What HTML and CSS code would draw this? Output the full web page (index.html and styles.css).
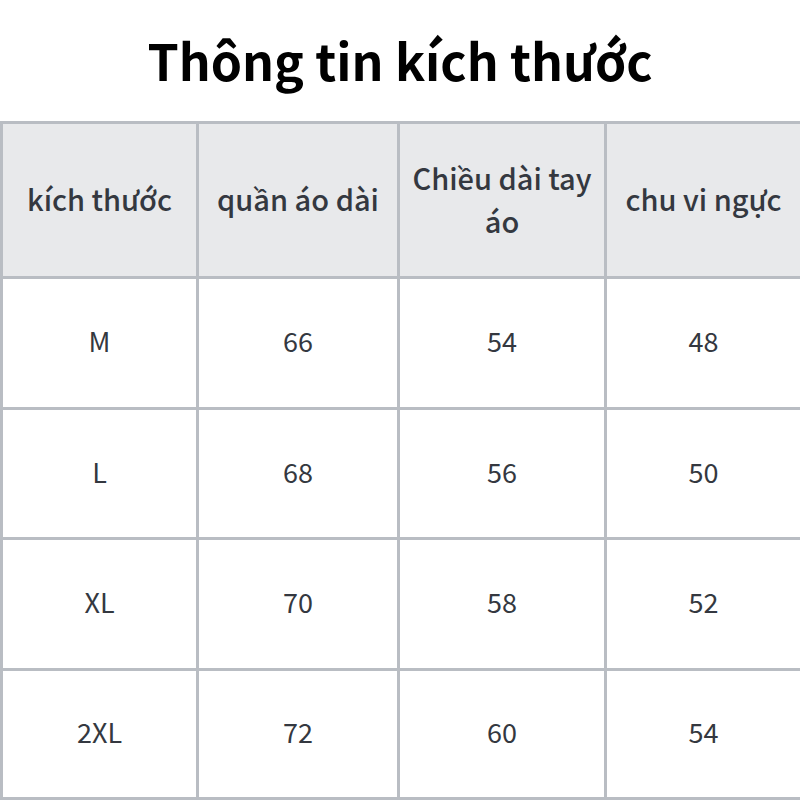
FILE: index.html
```html
<!DOCTYPE html>
<html lang="vi">
<head>
<meta charset="utf-8">
<title>Thông tin kích thước</title>
<link rel="stylesheet" href="styles.css">
</head>
<body>
<h1 class="title">Thông tin kích thước</h1>
<div class="table">
  <div class="cell head">kích thước</div>
  <div class="cell head">quần áo dài</div>
  <div class="cell head">Chiều dài tay áo</div>
  <div class="cell head">chu vi ngực</div>

  <div class="cell">M</div>
  <div class="cell">66</div>
  <div class="cell">54</div>
  <div class="cell">48</div>

  <div class="cell">L</div>
  <div class="cell">68</div>
  <div class="cell">56</div>
  <div class="cell">50</div>

  <div class="cell">XL</div>
  <div class="cell">70</div>
  <div class="cell">58</div>
  <div class="cell">52</div>

  <div class="cell">2XL</div>
  <div class="cell">72</div>
  <div class="cell">60</div>
  <div class="cell">54</div>
</div>
</body>
</html>
```
FILE: styles.css
```css
html, body {
  margin: 0;
  padding: 0;
  background: #ffffff;
}
body {
  width: 800px;
  height: 800px;
  overflow: hidden;
  font-family: "Noto Sans CJK SC", "Noto Sans", sans-serif;
}
.title {
  margin: 0;
  height: 121px;
  display: flex;
  align-items: center;
  justify-content: center;
  font-size: 50px;
  font-weight: 700;
  color: #000;
  padding-bottom: 3px;
  box-sizing: border-box;
}
.table {
  display: grid;
  grid-template-columns: 193px 198px 204px 193px;
  grid-template-rows: 152px 128px 127px 128px 126px;
  gap: 3px;
  padding: 3px 0 3px 3px;
  background: #b9bdc3;
  width: 800px;
  box-sizing: border-box;
}
.cell {
  background: #ffffff;
  display: flex;
  align-items: center;
  justify-content: center;
  text-align: center;
  font-size: 27px;
  color: #343840;
  padding-bottom: 5px;
  box-sizing: border-box;
}
.cell.head {
  background: #e8e9eb;
  font-size: 29px;
  font-weight: 500;
  line-height: 1.5;
  padding: 0 8px 2px;
}
```
